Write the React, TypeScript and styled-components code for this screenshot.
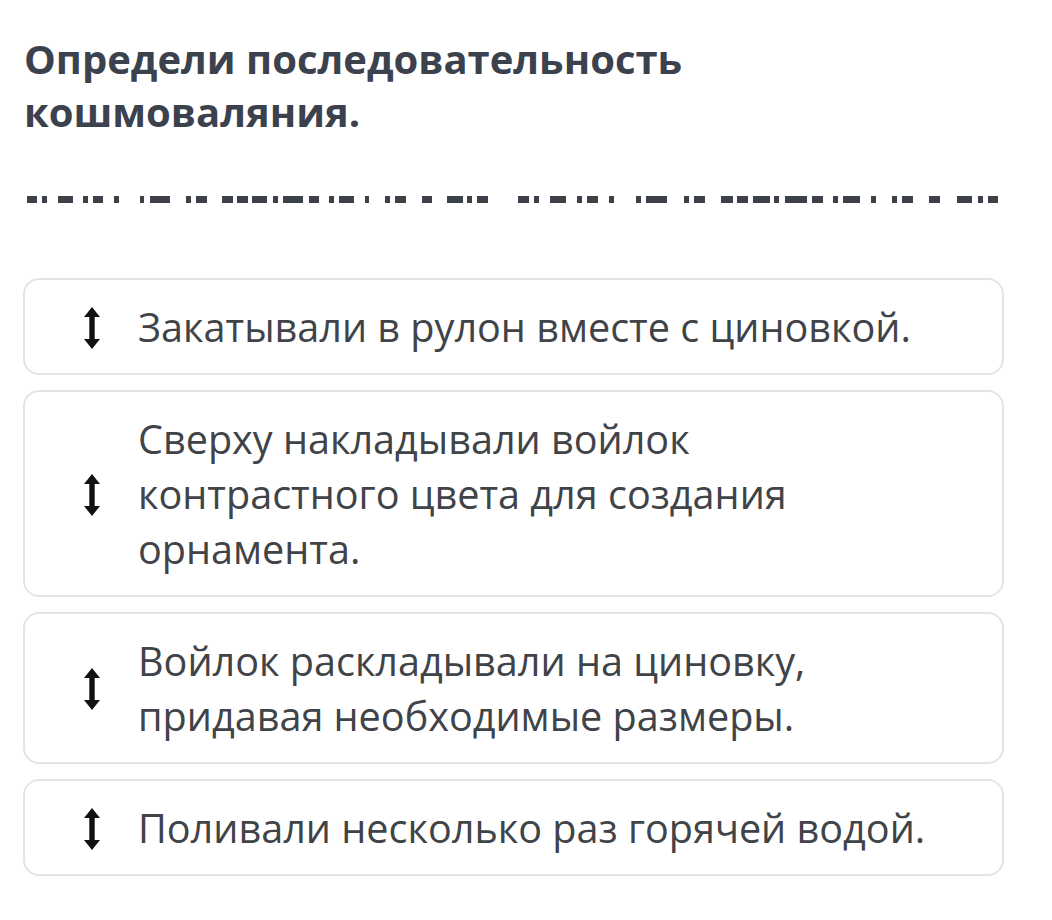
import React from "react";
import styled, { createGlobalStyle } from "styled-components";

const GlobalStyle = createGlobalStyle`
  body {
    margin: 0;
    background: #ffffff;
    font-family: "Open Sans", "Noto Sans", sans-serif;
  }
`;

const Page = styled.div`
  width: 1052px;
  padding: 32px 24px 40px 23px;
  box-sizing: border-box;
`;

const Title = styled.h1`
  margin: 0 0 0 1px;
  font-size: 40px;
  line-height: 53px;
  font-weight: 700;
  color: #3c424d;
`;

const Clipped = styled.div`
  margin: 58px 0 0 0;
  height: 10px;
  svg {
    display: block;
  }
`;

const List = styled.div`
  margin-top: 72px;
  display: flex;
  flex-direction: column;
  gap: 15px;
`;

const Card = styled.div`
  display: flex;
  align-items: center;
  gap: 37px;
  width: 981px;
  box-sizing: border-box;
  padding: 20px 20px 18px 58px;
  border: 2px solid #e4e4e4;
  border-radius: 16px;
  background: #fff;
`;

const Handle = styled.div`
  flex: 0 0 18px;
  display: flex;
  justify-content: center;
`;

const Text = styled.div`
  font-size: 39.6px;
  line-height: 55px;
  color: #404347;
`;

// x, width of each dark block in the clipped line
const blocks: [number, number][] = [
  [4, 10], [19, 5], [35, 15], [60, 5], [70, 10], [91, 5], [117, 4], [127, 20],
  [163, 5], [173, 11], [199, 11], [214, 11], [229, 15], [250, 5], [260, 20],
  [286, 10], [306, 5], [316, 15], [342, 4], [362, 5], [372, 11], [399, 10],
  [424, 16], [444, 5], [454, 11], [495, 11], [511, 5], [527, 16], [554, 5],
  [564, 11], [586, 5], [613, 5], [623, 21], [661, 5], [671, 11], [698, 12],
  [714, 11], [730, 17], [751, 5], [762, 22], [789, 11], [810, 5], [820, 17],
  [848, 5], [869, 5], [879, 11], [906, 11], [934, 15], [955, 5], [965, 10],
];

const ArrowIcon = () => (
  <svg width="18" height="42" viewBox="0 0 18 42">
    <path d="M9 0 L17 10 L11.7 10 L11.7 32 L17 32 L9 42 L1 32 L6.3 32 L6.3 10 L1 10 Z" fill="#111" />
  </svg>
);

const items = [
  ["Закатывали в рулон вместе с циновкой."],
  ["Сверху накладывали войлок", "контрастного цвета для создания", "орнамента."],
  ["Войлок раскладывали на циновку,", "придавая необходимые размеры."],
  ["Поливали несколько раз горячей водой."],
];

export default function App() {
  return (
    <>
      <GlobalStyle />
      <Page>
        <Title>
          Определи последовательность
          <br />
          кошмоваляния.
        </Title>
        <Clipped>
          <svg width="1000" height="8" viewBox="0 0 1000 8">
            {blocks.map(([x, w], i) => (
              <rect key={i} x={x} y={0} width={w} height={7} fill="#3b4049" />
            ))}
          </svg>
        </Clipped>
        <List>
          {items.map((lines, i) => (
            <Card key={i}>
              <Handle>
                <ArrowIcon />
              </Handle>
              <Text>
                {lines.map((l, j) => (
                  <React.Fragment key={j}>
                    {j > 0 && <br />}
                    {l}
                  </React.Fragment>
                ))}
              </Text>
            </Card>
          ))}
        </List>
      </Page>
    </>
  );
}
